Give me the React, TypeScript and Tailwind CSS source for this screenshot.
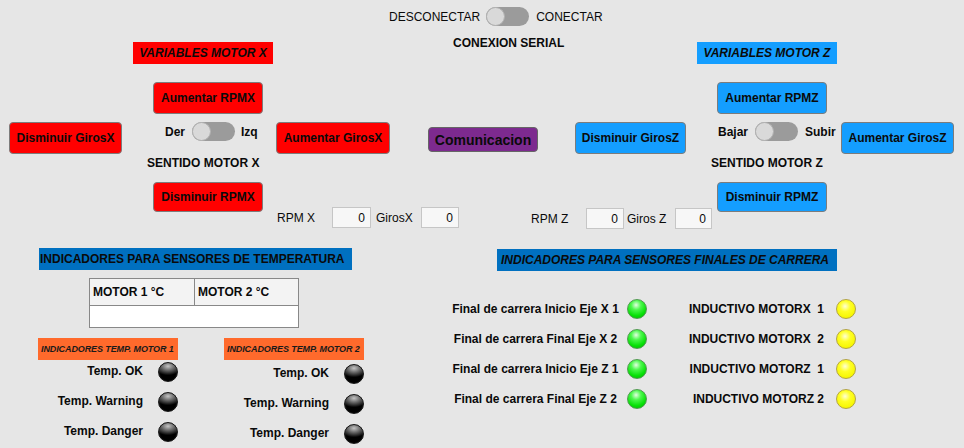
import React from "react";

function Toggle({ className = "" }: { className?: string }) {
  return (
    <div className={"flex w-[43px] h-[19px] rounded-full bg-[#9b9b9b] shrink-0 " + className}>
      <div className="w-[19px] h-[19px] rounded-full bg-[#d9d9d9] border border-[#b2b2b2]" />
    </div>
  );
}

function Btn({ label, className }: { label: string; className: string }) {
  return (
    <div
      className={
        "flex items-center justify-center shrink-0 rounded-[4px] border border-[#7c7c7c] font-bold whitespace-nowrap text-[#0a0a0a] " +
        className
      }
    >
      {label}
    </div>
  );
}

function Field({ className }: { className: string }) {
  return (
    <div
      className={
        "h-[21px] shrink-0 bg-[#f7f7f7] border border-[#c6c6c6] flex items-center justify-end pr-[5px] " +
        className
      }
    >
      0
    </div>
  );
}

const ledBlack =
  "w-[20px] h-[20px] shrink-0 rounded-full border border-[#161616] bg-[radial-gradient(ellipse_75%_50%_at_50%_18%,#c4c4c4_0%,#6a6a6a_45%,transparent_100%),radial-gradient(circle_at_50%_55%,#000_55%,#3a3a3a_100%)]";
const ledGreen =
  "w-[20px] h-[20px] shrink-0 rounded-full border border-[#4f9a4f] bg-[radial-gradient(circle_at_45%_28%,#e2ffe2_0%,#4cf84c_30%,#08e008_65%,#00b400_100%)]";
const ledYellow =
  "w-[20px] h-[20px] shrink-0 rounded-full border border-[#b3a443] bg-[radial-gradient(circle_at_45%_35%,#ffffd6_0%,#ffff25_35%,#f6f600_75%,#dcd000_100%)]";

function TempCol({ title, className, first }: { title: string; className: string; first: string }) {
  const rows = ["Temp. OK", "Temp. Warning", "Temp. Danger"];
  return (
    <div className={"w-[140px] flex flex-col " + className}>
      <div className="h-[22px] bg-[#ff6a2c] flex items-center pl-[3px] font-bold italic text-[9px] tracking-[-0.1px] whitespace-nowrap text-[#1a1a1a]">
        {title}
      </div>
      {rows.map((r, i) => (
        <div key={r} className={"flex items-center h-[20px] " + (i === 0 ? first : "mt-[10px]")}>
          <span className="w-[109px] text-right font-bold whitespace-nowrap -mt-[3px]">{r}</span>
          <div className={"ml-[15px] " + ledBlack} />
        </div>
      ))}
    </div>
  );
}

export default function App() {
  const finals = [
    ["Final de carrera Inicio Eje X 1", "INDUCTIVO MOTORX  1"],
    ["Final de carrera Final Eje X 2", "INDUCTIVO MOTORX  2"],
    ["Final de carrera Inicio Eje Z 1", "INDUCTIVO MOTORZ  1"],
    ["Final de carrera Final Eje Z 2", "INDUCTIVO MOTORZ 2"],
  ];
  return (
    <div className="w-[964px] h-[448px] overflow-hidden bg-[#e6e6e6] text-[12px] leading-[14px] text-[#0a0a0a] font-['Liberation_Sans',Arial,sans-serif]">
      {/* header */}
      <div className="flex items-center pl-[389px] pt-[7px] h-[26px]">
        <span>DESCONECTAR</span>
        <Toggle className="ml-[6px]" />
        <span className="ml-[7px]">CONECTAR</span>
      </div>

      {/* row A */}
      <div className="flex items-start">
        <div className="ml-[133px] mt-[16px] w-[140px] h-[22px] bg-[#ff0000] flex items-center justify-center font-bold italic whitespace-nowrap">
          VARIABLES MOTOR X
        </div>
        <div className="ml-[180px] mt-[10px] w-[110px] font-bold whitespace-nowrap">CONEXION SERIAL</div>
        <div className="ml-[134px] mt-[16px] w-[140px] h-[22px] bg-[#149eff] flex items-center justify-center font-bold italic whitespace-nowrap">
          VARIABLES MOTOR Z
        </div>
      </div>

      {/* row B */}
      <div className="flex mt-[18px]">
        <Btn label="Aumentar RPMX" className="ml-[153px] w-[110px] h-[32px] bg-[#ff0000]" />
        <Btn label="Aumentar RPMZ" className="ml-[454px] w-[110px] h-[32px] bg-[#149eff]" />
      </div>

      {/* row C */}
      <div className="flex items-start mt-[8px]">
        <Btn label="Disminuir GirosX" className="ml-[9px] w-[113px] h-[32px] bg-[#ff0000]" />
        <div className="ml-[25px] w-[129px] flex flex-col shrink-0">
          <div className="flex items-center h-[19px] ml-[18px] font-bold">
            <span>Der</span>
            <Toggle className="ml-[7px]" />
            <span className="ml-[6px]">Izq</span>
          </div>
          <div className="mt-[15px] font-bold whitespace-nowrap">SENTIDO MOTOR X</div>
        </div>
        <Btn label="Aumentar GirosX" className="w-[114px] h-[32px] bg-[#ff0000]" />
        <Btn
          label="Comunicacion"
          className="ml-[38px] mt-[5px] w-[110px] h-[25px] bg-[#7d2a8f] text-[14px] border-[#666]"
        />
        <Btn label="Disminuir GirosZ" className="ml-[37px] w-[111px] h-[32px] bg-[#149eff]" />
        <div className="ml-[25px] w-[130px] flex flex-col shrink-0">
          <div className="flex items-center h-[19px] ml-[7px] font-bold">
            <span>Bajar</span>
            <Toggle className="ml-[7px]" />
            <span className="ml-[7px]">Subir</span>
          </div>
          <div className="mt-[15px] font-bold whitespace-nowrap">SENTIDO MOTOR Z</div>
        </div>
        <Btn label="Aumentar GirosZ" className="w-[113px] h-[32px] bg-[#149eff]" />
      </div>

      {/* row D */}
      <div className="flex items-start mt-[12px]">
        <Btn label="Disminuir RPMX" className="ml-[153px] w-[110px] h-[30px] bg-[#ff0000]" />
        <div className="ml-[14px] mt-[25px] flex items-center h-[21px]">
          <span className="w-[55px]">RPM X</span>
          <Field className="w-[39px]" />
          <span className="w-[50px] pl-[5px]">GirosX</span>
          <Field className="w-[38px]" />
        </div>
        <div className="ml-[72px] mt-[26px] flex items-center h-[21px]">
          <span className="w-[55px]">RPM Z</span>
          <Field className="w-[38px]" />
          <span className="w-[51px] pl-[3px]">Giros Z</span>
          <Field className="w-[37px]" />
        </div>
        <Btn label="Disminuir RPMZ" className="ml-[5px] w-[110px] h-[30px] bg-[#149eff]" />
      </div>

      {/* bottom */}
      <div className="flex items-start mt-[19px]">
        <div className="w-[450px] flex flex-col shrink-0">
          <div className="ml-[39px] w-[313px] h-[22px] bg-[#0070c0] flex items-center pl-[1px] font-bold whitespace-nowrap">
            INDICADORES PARA SENSORES DE TEMPERATURA
          </div>
          <div className="ml-[89px] mt-[8px] w-[210px] border border-[#888] grid grid-cols-[105px_1fr]">
            <div className="h-[27px] bg-[#f3f3f3] border-b border-r border-[#888] flex items-center pl-[3px] font-bold">
              MOTOR 1 °C
            </div>
            <div className="h-[27px] bg-[#f3f3f3] border-b border-[#888] flex items-center pl-[3px] font-bold">
              MOTOR 2 °C
            </div>
            <div className="col-span-2 h-[21px] bg-white" />
          </div>
          <div className="flex items-start mt-[10px]">
            <TempCol title="INDICADORES TEMP. MOTOR 1" className="ml-[38px]" first="mt-[2px]" />
            <TempCol title="INDICADORES TEMP. MOTOR 2" className="ml-[46px]" first="mt-[4px]" />
          </div>
        </div>

        <div className="flex flex-col">
          <div className="ml-[47px] mt-[1px] w-[340px] h-[22px] bg-[#0070c0] flex items-center pl-[4px] font-bold italic whitespace-nowrap">
            INDICADORES PARA SENSORES FINALES DE CARRERA
          </div>
          <div className="mt-[23px] flex flex-col">
            {finals.map(([a, b]) => (
              <div key={a} className="flex items-center h-[30px]">
                <span className="w-[171px] text-center font-bold whitespace-nowrap">{a}</span>
                <div className={"ml-[6px] " + ledGreen} />
                <span className="w-[177px] text-right font-bold whitespace-pre">{b}</span>
                <div className={"ml-[12px] " + ledYellow} />
              </div>
            ))}
          </div>
        </div>
      </div>
    </div>
  );
}
